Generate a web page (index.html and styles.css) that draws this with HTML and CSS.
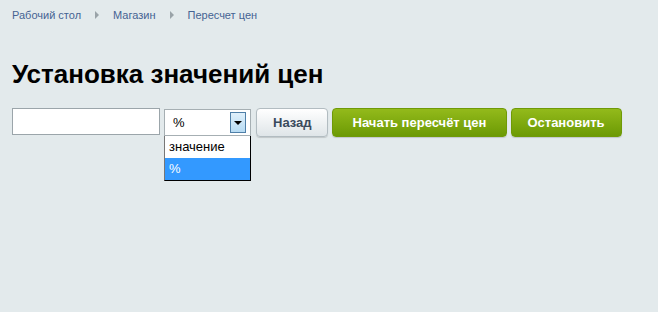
FILE: index.html
```html
<!DOCTYPE html>
<html>

<head>
    <title>Установка значений цен</title>
    <meta charset="UTF-8">
    <link rel="stylesheet" href="styles.css">
</head>

<body>
    <div class="crumbs">
        <a href="#">Рабочий стол</a>
        <span class="arrow"></span>
        <a href="#">Магазин</a>
        <span class="arrow"></span>
        <a href="#">Пересчет цен</a>
    </div>

    <h1>Установка значений цен</h1>

    <div class="form">
        <input type="text" class="value">
        <div class="select">
            <div class="box">
                <span class="current">%</span>
                <span class="drop"><span class="tri"></span></span>
            </div>
            <div class="list">
                <div class="opt">значение</div>
                <div class="opt sel">%</div>
            </div>
        </div>
        <button class="btn back">Назад</button>
        <button class="btn green wide">Начать пересчёт цен</button>
        <button class="btn green stop">Остановить</button>
    </div>
</body>

</html>
```

FILE: styles.css
```css
* {
    margin: 0;
    padding: 0;
    box-sizing: border-box;
}

body {
    background: #e3eaec;
    font-family: "Liberation Sans", Arial, sans-serif;
    padding: 0 12px;
}

.crumbs {
    display: flex;
    align-items: center;
    height: 30px;
    font-size: 11px;
}

.crumbs a {
    color: #456393;
    text-decoration: none;
}

.arrow {
    width: 0;
    height: 0;
    border-left: 4px solid #9aa3a8;
    border-top: 4px solid transparent;
    border-bottom: 4px solid transparent;
    margin: 0 14px 0 14px;
}

h1 {
    font-size: 26px;
    font-weight: bold;
    color: #000;
    margin-top: 29px;
    height: 49px;
}

.form {
    display: flex;
    align-items: flex-start;
}

.value {
    width: 148px;
    height: 27px;
    border: 1px solid #9ba5aa;
    background: #fff;
    margin-right: 4px;
}

.select {
    width: 87px;
    margin-top: 1px;
    margin-right: 5px;
    font-size: 13px;
    display: flex;
    flex-direction: column;
}

.box {
    height: 27px;
    border: 1px solid #a6afb3;
    background: #fff;
    display: flex;
    align-items: center;
    justify-content: space-between;
    padding: 0 4px 0 8px;
}

.drop {
    width: 16px;
    height: 21px;
    border: 1px solid #4f7fa8;
    background: linear-gradient(#e0f0fb, #b7dbf3);
    display: flex;
    align-items: center;
    justify-content: center;
}

.tri {
    width: 0;
    height: 0;
    border-top: 4px solid #000;
    border-left: 4px solid transparent;
    border-right: 4px solid transparent;
}

.list {
    background: #fff;
    border: 1px solid #000;
    border-top: none;
    border-left-color: #777;
}

.opt {
    height: 22px;
    line-height: 22px;
    padding-left: 4px;
    color: #000;
}

.sel {
    background: #3399ff;
    color: #fff;
}

.btn {
    height: 29px;
    padding: 0 16px;
    margin-right: 4px;
    border: 1px solid #b2bcc1;
    border-radius: 4px;
    background: linear-gradient(#ffffff, #dfe5e8);
    color: #3a4a5c;
    font-family: "Liberation Sans", Arial, sans-serif;
    font-size: 13px;
    font-weight: bold;
    box-shadow: 0 1px 1px rgba(0, 0, 0, 0.15);
}

.back {
    padding: 0 15px 0 16px;
}

.green {
    border-color: #6f9a07;
    background: linear-gradient(#93ba1b, #6c9a04);
    color: #fff;
}

.wide {
    padding: 0 20px;
}

.stop {
    padding: 0 16px 0 15px;
}
```
